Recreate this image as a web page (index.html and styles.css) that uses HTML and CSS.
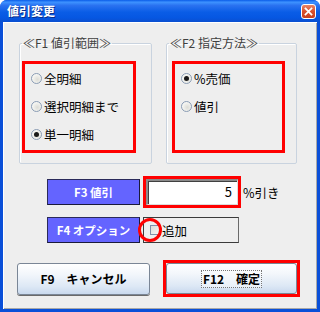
FILE: index.html
```html
<!DOCTYPE html>
<html lang="ja">
<head>
<meta charset="utf-8">
<link rel="stylesheet" href="styles.css">
</head>
<body>
<div class="window">
  <div class="titlebar">
    <span class="title">値引変更</span>
    <span class="close"><svg width="15" height="15" viewBox="0 0 15 15"><path d="M4 4 L11 11 M11 4 L4 11" stroke="#fff" stroke-width="2" stroke-linecap="square"/></svg></span>
  </div>
  <div class="client">
    <div class="groups">
      <fieldset class="group g1">
        <legend>≪F1 値引範囲≫</legend>
        <div class="hl hl1">
          <div class="radio-row"><span class="radio"></span><span>全明細</span></div>
          <div class="radio-row"><span class="radio"></span><span>選択明細まで</span></div>
          <div class="radio-row"><span class="radio on"></span><span>単一明細</span></div>
        </div>
      </fieldset>
      <fieldset class="group g2">
        <legend>≪F2 指定方法≫</legend>
        <div class="hl hl2">
          <div class="radio-row"><span class="radio on"></span><span>%売価</span></div>
          <div class="radio-row"><span class="radio"></span><span>値引</span></div>
        </div>
      </fieldset>
    </div>
    <div class="row r1">
      <div class="fbtn">F3 値引</div>
      <div class="hl hlinput"><div class="input">5</div></div>
      <span class="unit">%引き</span>
    </div>
    <div class="row r2">
      <div class="fbtn">F4 オプション</div>
      <div class="chkframe">
        <span class="chk"></span><span class="chklabel">追加</span>
        <span class="circle"></span>
      </div>
    </div>
    <div class="bottom">
      <div class="btn b9">F9　キャンセル</div>
      <div class="hl hlbtn"><div class="btn b12"><span class="focusrect">F12　確定</span></div></div>
    </div>
  </div>
</div>
</body>
</html>
```
FILE: styles.css
```css
html, body {
  margin: 0;
  padding: 0;
  background: #ffffff;
}
body {
  width: 320px;
  height: 312px;
  overflow: hidden;
  font-family: "Noto Sans CJK JP", "Noto Sans", sans-serif;
}
.window {
  width: 320px;
  height: 312px;
  box-sizing: border-box;
  background: #0a4fd8;
  border-radius: 7px 7px 0 0;
  display: flex;
  flex-direction: column;
  padding: 0 3px 3px 3px;
}
.titlebar {
  height: 22px;
  flex: none;
  margin: 0 -3px;
  padding: 0 4px 0 7px;
  border-radius: 7px 7px 0 0;
  background: linear-gradient(to bottom, #0a5ce8 0%, #3d92ff 10%, #2a72f0 25%, #0a5de6 55%, #0657e2 80%, #0a4fd0 100%);
  display: flex;
  align-items: center;
  justify-content: space-between;
}
.title {
  color: #ffffff;
  font-weight: bold;
  font-size: 12px;
  line-height: 14px;
  text-shadow: 1px 1px 0 #0a2e8a;
}
.close {
  width: 15px;
  height: 15px;
  box-sizing: border-box;
  border: 1px solid #ffffff;
  border-radius: 3px;
  background: linear-gradient(to bottom, #e88468 0%, #d9502c 50%, #c8401e 100%);
  display: flex;
  align-items: center;
  justify-content: center;
  margin-top: 1px;
}
.close svg {
  width: 13px;
  height: 13px;
}
.client {
  flex: 1;
  background: #eeeeee;
  box-shadow: inset 1px 1px 0 #ffffff, inset -1px -1px 0 #a8a8a8;
  display: flex;
  flex-direction: column;
}
.groups {
  display: flex;
  gap: 14px;
  padding-left: 16px;
  margin-top: 14px;
}
.group {
  margin: 0;
  padding: 0;
  box-sizing: border-box;
  height: 128px;
  border: 1px solid #c9d3df;
  box-shadow: inset 1px 1px 0 #ffffff;
  border-radius: 2px;
}
.g1 { width: 133px; }
.g2 { width: 131px; }
legend {
  font-size: 12px;
  line-height: 14px;
  color: #404040;
  padding: 0 1px;
  margin-left: 2px;
}
.hl {
  border: 3px solid #ff0000;
  box-sizing: border-box;
}
.hl1 {
  width: 114px;
  height: 92px;
  margin: 11px 0 0 2px;
}
.hl2 {
  width: 113px;
  height: 92px;
  margin: 11px 0 0 5px;
}
.radio-row {
  height: 28px;
  display: flex;
  align-items: center;
  gap: 2px;
  padding-left: 6px;
  font-size: 12.5px;
  color: #000000;
}
.radio {
  width: 11px;
  height: 11px;
  box-sizing: border-box;
  border-radius: 50%;
  border: 1px solid #8a9cb4;
  background: radial-gradient(circle at 60% 60%, #dcdcd6 0%, #f4f4f0 60%, #ffffff 100%);
  display: flex;
  align-items: center;
  justify-content: center;
  flex: none;
}
.radio.on::after {
  content: "";
  width: 5px;
  height: 5px;
  border-radius: 50%;
  background: #1a1a1a;
}
.row {
  display: flex;
  align-items: center;
  padding-left: 44px;
}
.r1 {
  margin-top: 12px;
  height: 32px;
}
.r2 {
  margin-top: 9px;
  height: 26px;
}
.fbtn {
  width: 93px;
  height: 26px;
  box-sizing: border-box;
  background: #6464ff;
  border: 1px solid #2a2a5a;
  border-right-color: #1a1a3a;
  border-bottom-color: #1a1a3a;
  color: #ffffff;
  font-weight: bold;
  font-size: 11.5px;
  display: flex;
  align-items: center;
  justify-content: center;
  flex: none;
}
.hlinput {
  width: 98px;
  height: 32px;
  margin-left: 3px;
}
.input {
  width: 92px;
  height: 26px;
  box-sizing: border-box;
  background: #ffffff;
  border-top: 2px solid #8a8a8a;
  border-left: 2px solid #8a8a8a;
  border-right: 1px solid #dcdcdc;
  border-bottom: 1px solid #dcdcdc;
  box-shadow: inset 1px 1px 0 #404040;
  text-align: right;
  padding-right: 5px;
  font-size: 13px;
  line-height: 22px;
  color: #000000;
}
.unit {
  margin-left: 2px;
  font-size: 12.5px;
  color: #000000;
}
.chkframe {
  position: relative;
  width: 96px;
  height: 26px;
  box-sizing: border-box;
  margin-left: 3px;
  border: 1px solid #3a3a3a;
  border-right-color: #6a6a6a;
  display: flex;
  align-items: center;
  padding-left: 6px;
  gap: 2px;
}
.chk {
  width: 10px;
  height: 10px;
  box-sizing: border-box;
  border: 1px solid #7f8fa8;
  background: linear-gradient(135deg, #dcdcd8, #f6f6f4);
  flex: none;
}
.chklabel {
  font-size: 12.5px;
  color: #000000;
}
.circle {
  position: absolute;
  left: -6px;
  top: 0px;
  width: 24px;
  height: 24px;
  box-sizing: border-box;
  border: 3px solid #ff0000;
  border-radius: 50%;
}
.bottom {
  display: flex;
  align-items: center;
  padding-left: 14px;
  margin-top: 17px;
  height: 37px;
}
.btn {
  box-sizing: border-box;
  height: 32px;
  border: 1px solid #7a8696;
  border-radius: 3px;
  background: linear-gradient(to bottom, #ffffff 0%, #f2f6fb 35%, #dde8f5 75%, #c9d9ee 100%);
  display: flex;
  align-items: center;
  justify-content: center;
  font-weight: bold;
  font-size: 12px;
  color: #000000;
  flex: none;
}
.b9 {
  width: 133px;
  box-shadow: 0 1px 0 #6a6a6a;
}
.hlbtn {
  width: 137px;
  height: 37px;
  margin-left: 13px;
  display: flex;
  align-items: center;
  justify-content: center;
}
.b12 {
  width: 131px;
  height: 31px;
}
.focusrect {
  border: 1px dotted #777777;
  background: rgba(255,255,255,0.4);
  padding: 0 1px;
  line-height: 16px;
}
```
